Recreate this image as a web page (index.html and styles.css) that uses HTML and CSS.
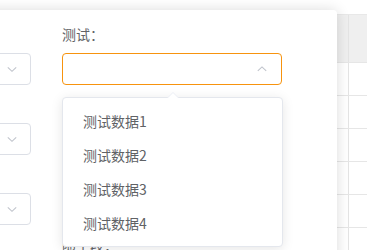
FILE: index.html
```html
<!DOCTYPE html>
<html lang="zh">
<head>
<meta charset="utf-8">
<link rel="stylesheet" href="styles.css">
</head>
<body>
<div class="page">
  <div class="table">
    <div class="row head"><div class="cell c1"></div><div class="cell c2"></div></div>
    <div class="row"><div class="cell c1"></div><div class="cell c2"></div></div>
    <div class="row"><div class="cell c1"></div><div class="cell c2"></div></div>
    <div class="row"><div class="cell c1"></div><div class="cell c2"></div></div>
    <div class="row"><div class="cell c1"></div><div class="cell c2"></div></div>
    <div class="row"><div class="cell c1"></div><div class="cell c2"></div></div>
    <div class="row"><div class="cell c1"></div><div class="cell c2"></div></div>
  </div>
</div>

<div class="dialog">
  <div class="form">
    <div class="col">
      <div class="field">
        <div class="label">类型：</div>
        <div class="select"><svg class="chev" viewBox="0 0 12 12"><path d="M1.8 4.3 6 8.3 10.2 4.3"/></svg></div>
      </div>
      <div class="field">
        <div class="label">状态：</div>
        <div class="select"><svg class="chev" viewBox="0 0 12 12"><path d="M1.8 4.3 6 8.3 10.2 4.3"/></svg></div>
      </div>
      <div class="field">
        <div class="label">来源：</div>
        <div class="select"><svg class="chev" viewBox="0 0 12 12"><path d="M1.8 4.3 6 8.3 10.2 4.3"/></svg></div>
      </div>
    </div>
    <div class="col col-main">
      <div class="field">
        <div class="label">测试：</div>
        <div class="select focus"><svg class="chev" viewBox="0 0 12 12"><path d="M1.8 7.9 6 3.9 10.2 7.9"/></svg></div>
        <div class="dropdown">
          <span class="arrow"></span>
          <ul class="options">
            <li>测试数据1</li>
            <li>测试数据2</li>
            <li>测试数据3</li>
            <li>测试数据4</li>
          </ul>
        </div>
      </div>
      <div class="field">
        <div class="label">名称：</div>
        <div class="select"></div>
      </div>
      <div class="field">
        <div class="label">编号：</div>
        <div class="select"></div>
      </div>
      <div class="field">
        <div class="label">随手段：</div>
        <div class="select"></div>
      </div>
    </div>
  </div>
</div>
</body>
</html>
```
FILE: styles.css
```css
* { box-sizing: border-box; }
html, body { margin: 0; padding: 0; }
body {
  width: 367px;
  height: 250px;
  overflow: hidden;
  background: #f4f4f4;
  font-family: "Noto Sans CJK SC", "Liberation Sans", sans-serif;
  font-size: 14px;
  color: #606266;
  position: relative;
}
.page {
  padding-top: 14px;
  background: #fff;
  height: 100%;
}
.table {
  width: 100%;
  border-top: 1px solid #e8e8e8;
}
.row {
  display: flex;
  height: 33px;
  border-bottom: 1px solid #e6e6e6;
}
.row.head {
  height: 48px;
  background: #efefef;
}
.cell.c1 { width: 349px; border-right: 1px solid #e4e4e4; }
.cell.c2 { flex: 1; }

.dialog {
  position: absolute;
  left: -169px;
  top: 10px;
  width: 506px;
  height: 300px;
  background: #fff;
  border-radius: 4px;
  box-shadow: 0 0 14px rgba(0, 0, 0, 0.14);
  padding-top: 14px;
}
.form {
  display: grid;
  grid-template-columns: 200px 220px;
  column-gap: 31px;
}
.col { display: flex; flex-direction: column; }
.field {
  position: relative;
  margin-bottom: 9px;
}
.label {
  height: 20px;
  line-height: 20px;
  margin-bottom: 9px;
  white-space: nowrap;
}
.select {
  height: 32px;
  border: 1px solid #dcdfe6;
  border-radius: 4px;
  background: #fff;
  display: flex;
  align-items: center;
  justify-content: flex-end;
  padding-right: 12px;
}
.select.focus { border-color: #f7930e; }
.chev {
  width: 12px;
  height: 12px;
  fill: none;
  stroke: #c0c4cc;
  stroke-width: 1.1;
}
.select.focus .chev { margin-right: 1px; }

.dropdown {
  position: absolute;
  left: 0;
  top: 73px;
  width: 221px;
  background: #fff;
  border: 1px solid #e4e7ed;
  border-radius: 4px;
  box-shadow: 0 2px 12px rgba(0, 0, 0, 0.1);
  z-index: 2;
}
.arrow {
  position: absolute;
  top: -6px;
  left: 104px;
  width: 0;
  height: 0;
  border-left: 6px solid transparent;
  border-right: 6px solid transparent;
  border-bottom: 6px solid #ebeef5;
}
.arrow::after {
  content: "";
  position: absolute;
  left: -6px;
  top: 1px;
  border-left: 6px solid transparent;
  border-right: 6px solid transparent;
  border-bottom: 6px solid #fff;
}
.options {
  list-style: none;
  margin: 0;
  padding: 6px 0;
}
.options li {
  height: 34px;
  line-height: 34px;
  padding: 0 20px;
  color: #606266;
  font-size: 14px;
}
```
